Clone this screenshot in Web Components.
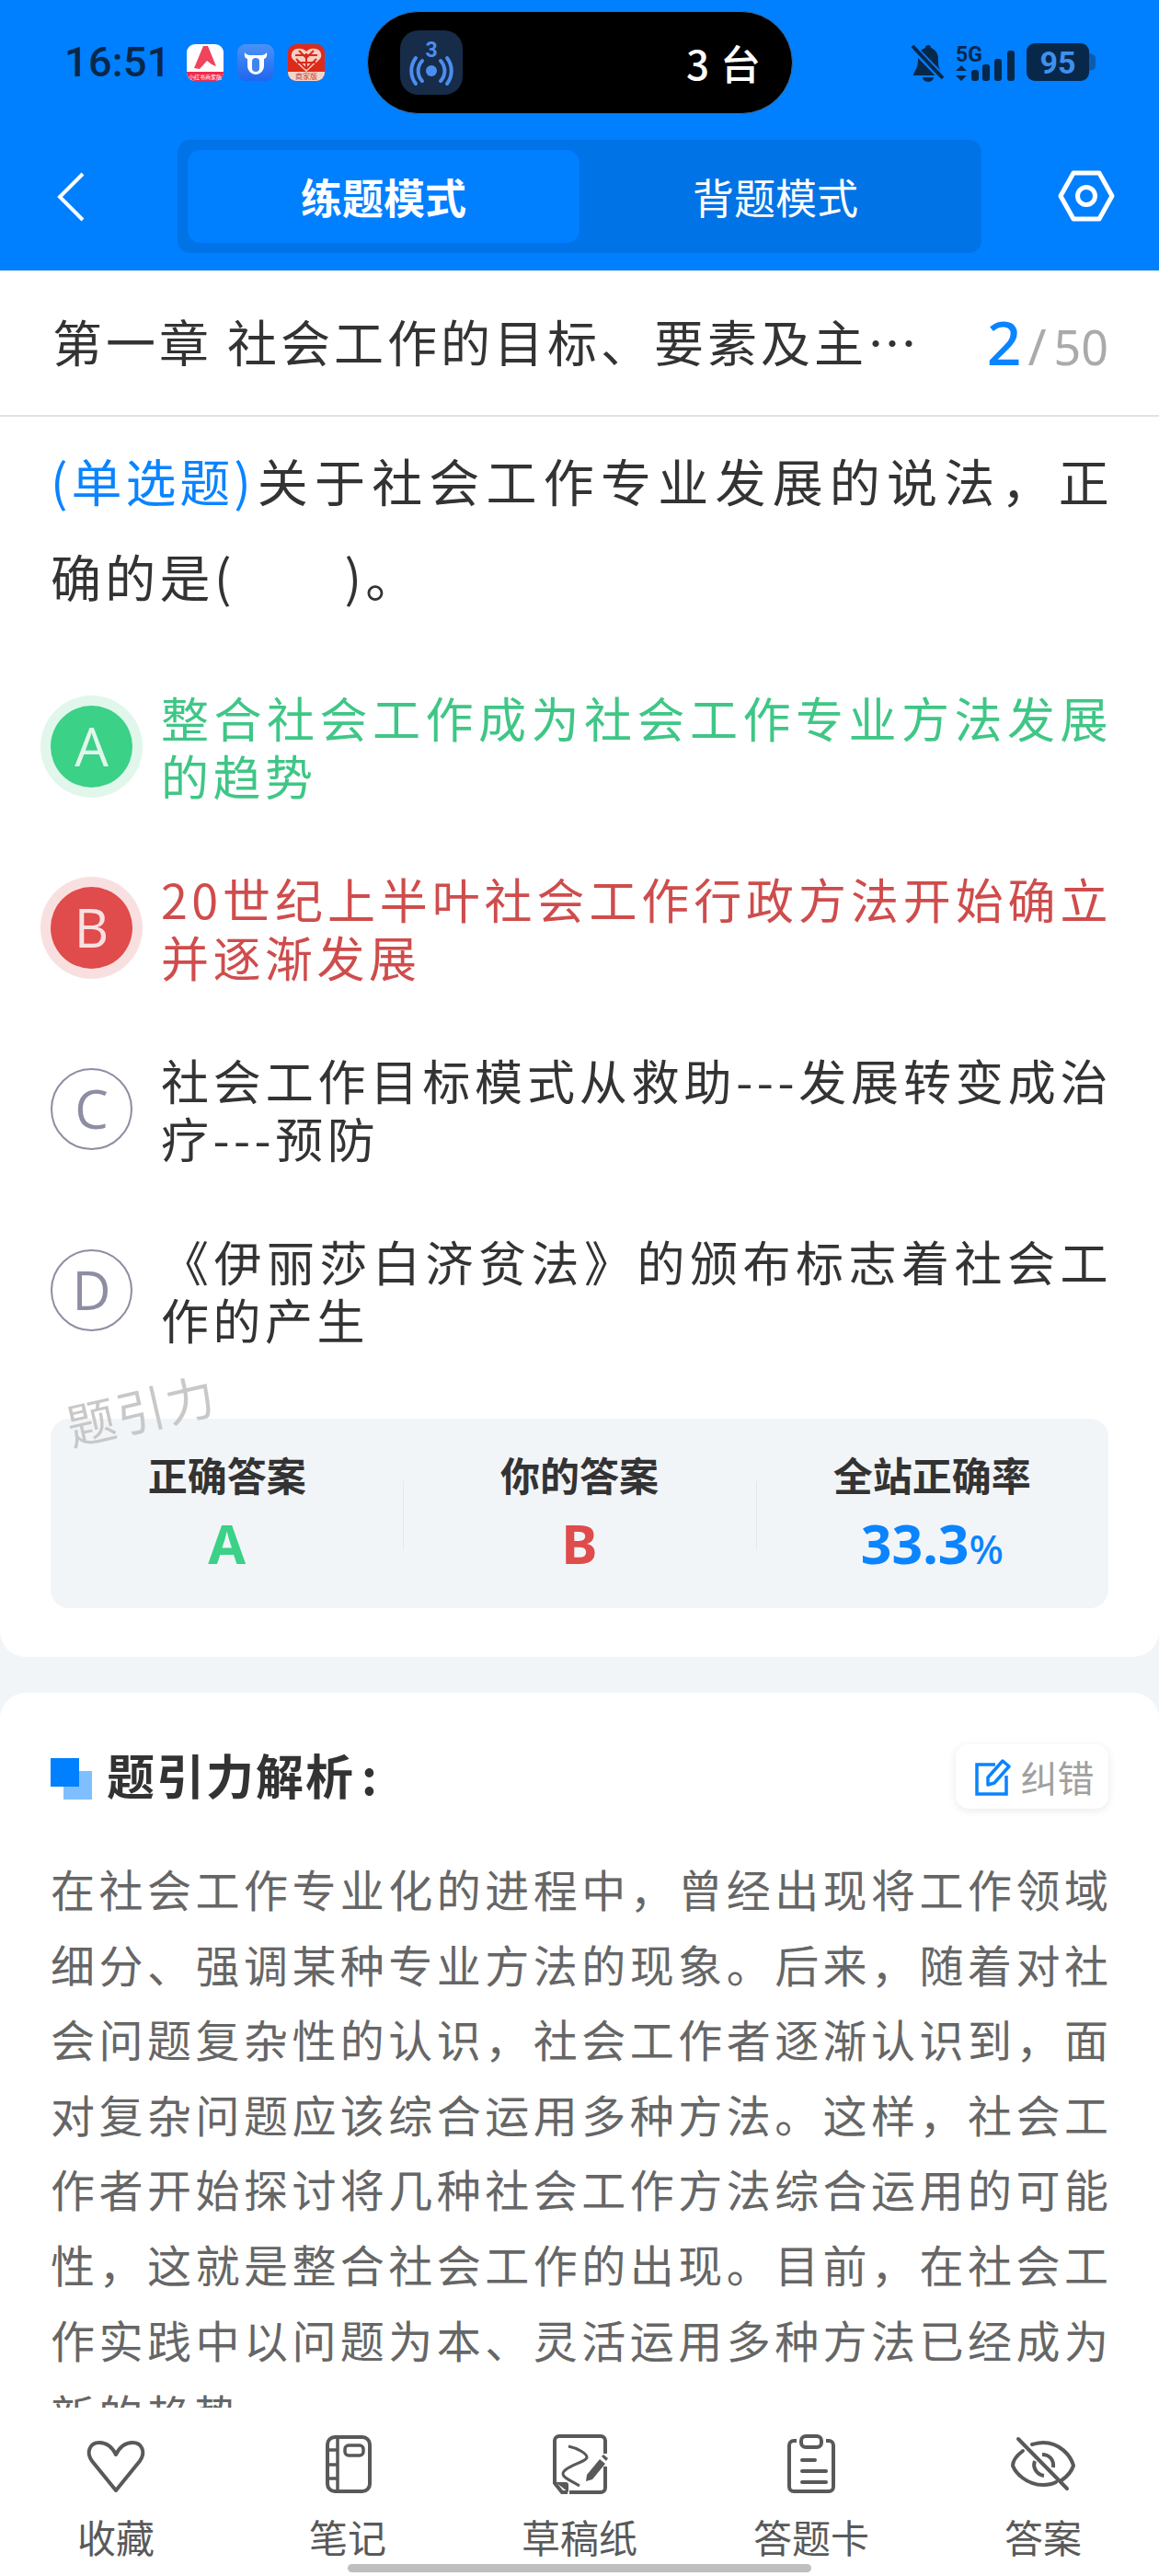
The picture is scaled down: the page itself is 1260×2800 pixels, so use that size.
<!DOCTYPE html>
<html lang="zh">
<head>
<meta charset="utf-8">
<title>练题模式</title>
<style>
    html, body { margin: 0; padding: 0; height: 2800px; overflow: hidden; }
    body {
        display: flex;
        flex-direction: column;
        background: #f2f5f8;
        font-family: "Noto Sans CJK SC", "Noto Sans", sans-serif;
    }
    .scroll { flex: 1; min-height: 0; overflow: hidden; display: block; }
    question-card b { font-weight: 400; color: #0a84ff; letter-spacing: 1px; margin-right: 3px; }
</style>
</head>
<body>
<app-header></app-header>
<div class="scroll">
    <title-row heading="第一章 社会工作的目标、要素及主…" current="2" total="50"></title-row>
    <question-card>
        <span slot="question"><b>(单选题)</b>关于社会工作专业发展的说法，正确的是(&emsp;&emsp;)。</span>
        <quiz-option letter="A" state="right">整合社会工作成为社会工作专业方法发展的趋势</quiz-option>
        <quiz-option letter="B" state="wrong">20世纪上半叶社会工作行政方法开始确立并逐渐发展</quiz-option>
        <quiz-option letter="C">社会工作目标模式从救助---发展转变成治疗---预防</quiz-option>
        <quiz-option letter="D">《伊丽莎白济贫法》的颁布标志着社会工作的产生</quiz-option>
        <answer-stats slot="stats" right="A" mine="B" rate="33.3"></answer-stats>
    </question-card>
    <analysis-card>在社会工作专业化的进程中，曾经出现将工作领域细分、强调某种专业方法的现象。后来，随着对社会问题复杂性的认识，社会工作者逐渐认识到，面对复杂问题应该综合运用多种方法。这样，社会工作者开始探讨将几种社会工作方法综合运用的可能性，这就是整合社会工作的出现。目前，在社会工作实践中以问题为本、灵活运用多种方法已经成为新的趋势。</analysis-card>
</div>
<tool-bar></tool-bar>

<script>
class AppHeader extends HTMLElement {
    constructor() {
        super();
        this.attachShadow({ mode: 'open' });
    }

    connectedCallback() {
        this.shadowRoot.innerHTML = `
            <style>
                :host { display: block; height: 294px; background: #007fff; flex: none; color: #fff; }
                .status { height: 152px; display: flex; align-items: flex-start; position: relative; }
                .time {
                    margin: 44px 0 0 70px; width: 133px;
                    font: 500 45px/48px Roboto, sans-serif; color: #08284a; letter-spacing: 0.3px;
                }
                .apps { margin-top: 48px; display: flex; gap: 15px; }
                .apps svg { display: block; }
                .pill {
                    margin: 12px 0 0 46px;
                    width: 463px; height: 112px; box-sizing: border-box;
                    background: #000; border-radius: 56px; border: 1px solid #3a6fa8;
                    display: flex; align-items: center; padding: 0 33px 0 35px;
                    justify-content: space-between;
                }
                .pill span { font: 500 44px/50px "Noto Sans CJK SC", sans-serif; letter-spacing: 1px; }
                .sys { margin: 47px 0 0 127px; display: flex; align-items: flex-start; }
                .nav { display: flex; align-items: flex-start; }
                .back { margin: 35px 0 0 62px; width: 131px; }
                .seg {
                    width: 874px; height: 123px; box-sizing: border-box;
                    background: #0073e6; border-radius: 14px; padding: 11px;
                    display: grid; grid-template-columns: 426px 1fr;
                }
                .seg div { display: flex; align-items: center; justify-content: center; font-size: 45px; line-height: 50px; border-radius: 14px; }
                .seg .on { background: #007fff; font-weight: 700; }
                .gear { margin: 33px 0 0 83px; }
                svg { display: block; }
            </style>
            <div class="status">
                <div class="time">16:51</div>
                <div class="apps">
                    <svg width="40" height="40" viewBox="0 0 40 40">
                        <rect width="40" height="40" rx="9" fill="#fff"/>
                        <path d="M0 30h40v1a9 9 0 0 1-9 9H9a9 9 0 0 1-9-9z" fill="#ee2c4c"/>
                        <path d="M18 2l5 0 9 22-5-2-5-4-8 9-6-1z" fill="#f0445c"/>
                        <text x="20" y="38" font-size="6" fill="#fff" text-anchor="middle">小红书商家版</text>
                    </svg>
                    <svg width="40" height="40" viewBox="0 0 40 40">
                        <defs><linearGradient id="qn" x1="0" y1="0" x2="0" y2="1"><stop offset="0" stop-color="#4a92f6"/><stop offset="1" stop-color="#1f66ee"/></linearGradient></defs>
                        <rect width="40" height="40" rx="9" fill="url(#qn)"/>
                        <path d="M8 9q2 3 5 3h14q3 0 5-3q1 6-3 7v8a9 9 0 0 1-18 0v-8q-4-1-3-7z" fill="#fff"/>
                        <rect x="16" y="15" width="8" height="15" rx="4" fill="#3f84f2"/>
                    </svg>
                    <svg width="40" height="40" viewBox="0 0 40 40">
                        <rect width="40" height="40" rx="9" fill="#dd2a1a"/>
                        <path d="M0 30h40v1a9 9 0 0 1-9 9H9a9 9 0 0 1-9-9z" fill="#f6d5c8"/>
                        <path d="M20 30L6 17a7 7 0 0 1 4-12q6-1 10 3q4-4 10-3a7 7 0 0 1 4 12z" fill="#f5cfc4"/>
                        <path d="M20 27L9 16M20 27l11-11M12 7l8 8 8-8M20 10v17M8 12h24M10 20h20" stroke="#dd2a1a" stroke-width="2" fill="none"/>
                        <text x="20" y="38" font-size="8" fill="#c43a2a" text-anchor="middle">商家版</text>
                    </svg>
                </div>
                <div class="pill">
                    <svg width="68" height="70" viewBox="0 0 68 70">
                        <rect width="68" height="70" rx="20" fill="#172c48"/>
                        <text x="34" y="29" font-size="23" font-weight="700" fill="#4c8df0" text-anchor="middle" font-family="Roboto, sans-serif">3</text>
                        <circle cx="34" cy="44" r="6" fill="#4c8df0"/>
                        <path d="M24 33a16 16 0 0 0 0 22M44 33a16 16 0 0 1 0 22M17 30a23 23 0 0 0 0 28M51 30a23 23 0 0 1 0 28" fill="none" stroke="#4c8df0" stroke-width="4" stroke-linecap="round"/>
                    </svg>
                    <span>3 台</span>
                </div>
                <div class="sys">
                    <svg width="204" height="42" viewBox="0 0 204 42">
                        <path d="M20 2c-2 0-3 1-3 3-6 2-8 7-8 12 0 7-1 10-5 16v2h31v-3c-4-5-4-9-4-15 0-6-3-10-8-12 0-2-1-3-3-3z" fill="#08284a"/>
                        <path d="M14 37a6 5 0 0 0 12 0z" fill="#08284a"/>
                        <path d="M2 3l34 35" stroke="#007fff" stroke-width="8"/>
                        <path d="M3 3l33 35" stroke="#08284a" stroke-width="4"/>
                        <text x="50" y="20" font-size="23" font-weight="700" fill="#08284a" font-family="Roboto, sans-serif">5G</text>
                        <path d="M56 24l6 6H50zM56 41l6-6H50z" fill="#08284a"/>
                        <rect x="67" y="29" width="8" height="12" rx="3" fill="#08284a"/>
                        <rect x="79" y="23" width="8" height="18" rx="3" fill="#08284a"/>
                        <rect x="92" y="17" width="8" height="24" rx="3" fill="#08284a"/>
                        <rect x="106" y="8" width="8" height="33" rx="3" fill="#08284a"/>
                        <rect x="127" y="0" width="68" height="41" rx="9" fill="#08284a"/>
                        <path d="M195 11q7 1 7 5v9q0 4-7 5z" fill="#0a5cb3"/>
                        <text x="161" y="33" font-size="34" font-weight="700" fill="#3f90ee" text-anchor="middle" font-family="Roboto, sans-serif">95</text>
                    </svg>
                </div>
            </div>
            <div class="nav">
                <div class="back">
                    <svg width="30" height="54" viewBox="0 0 30 54"><path d="M28 2L3 27l25 25" fill="none" stroke="#fff" stroke-width="4"/></svg>
                </div>
                <div class="seg">
                    <div class="on">练题模式</div>
                    <div>背题模式</div>
                </div>
                <div class="gear">
                    <svg width="62" height="56" viewBox="0 0 62 56">
                        <path d="M17 3h28l14 25-14 25H17L3 28z" fill="none" stroke="#fff" stroke-width="5" stroke-linejoin="round"/>
                        <circle cx="31" cy="28" r="9.5" fill="none" stroke="#fff" stroke-width="5"/>
                    </svg>
                </div>
            </div>
        `;
    }
}

class TitleRow extends HTMLElement {
    constructor() {
        super();
        this.attachShadow({ mode: 'open' });
    }

    connectedCallback() {
        this.shadowRoot.innerHTML = `
            <style>
                :host {
                    display: flex; align-items: center; height: 159px; box-sizing: border-box;
                    padding: 0 55px 4px 57px; background: #fff; border-bottom: 2px solid #e2e2e2;
                }
                .h {
                    flex: none; white-space: nowrap;
                    font-size: 54px; line-height: 70px; letter-spacing: 4px; color: #333;
                }
                .n { margin-left: auto; display: flex; align-items: baseline; font-family: "Noto Sans", sans-serif; }
                .c { font-size: 66px; color: #0a84ff; font-weight: 500; }
                .s { font-size: 54px; color: #aaa; margin: 0 8px 0 7px; }
                .t { font-size: 52px; color: #aaa; }
            </style>
            <div class="h">${this.getAttribute('heading')}</div>
            <div class="n">
                <span class="c">${this.getAttribute('current')}</span><span class="s">/</span><span class="t">${this.getAttribute('total')}</span>
            </div>
        `;
    }
}

class QuestionCard extends HTMLElement {
    constructor() {
        super();
        this.attachShadow({ mode: 'open' });
    }

    connectedCallback() {
        this.shadowRoot.innerHTML = `
            <style>
                :host {
                    display: block; position: relative; background: #fff;
                    padding: 16px 55px 53px; border-radius: 0 0 28px 28px; color: #333;
                }
                .q { font-size: 55px; line-height: 104px; letter-spacing: 4.3px; text-align: justify; margin: 0 -5px 71px 0; }
                .opts { display: flex; flex-direction: column; gap: 71px; margin-bottom: 77px; }
                ::slotted(span) { display: block; }
                .mark {
                    position: absolute; left: 66px; top: 1067px;
                    font-size: 53px; line-height: 60px; letter-spacing: 2px; color: #c8c8c8;
                    transform: rotate(-13deg); transform-origin: left top; pointer-events: none;
                    z-index: 1;
                }
            </style>
            <div class="q"><slot name="question"></slot></div>
            <div class="opts"><slot></slot></div>
            <slot name="stats"></slot>
            <div class="mark">题引力</div>
        `;
    }
}

class QuizOption extends HTMLElement {
    constructor() {
        super();
        this.attachShadow({ mode: 'open' });
    }

    connectedCallback() {
        const state = this.getAttribute('state') || 'idle';
        this.shadowRoot.innerHTML = `
            <style>
                :host { display: flex; align-items: center; margin-left: -11px; color: #333; }
                .dot {
                    flex: none; width: 89px; height: 89px; margin: 0 11px; box-sizing: border-box;
                    border-radius: 50%; display: flex; align-items: center; justify-content: center;
                    font: 400 58px/1 "Open Sans", sans-serif;
                }
                .txt {
                    flex: 1; margin: 0 -4px 0 20px; font-size: 52px; line-height: 63px;
                    letter-spacing: 4.5px; text-align: justify;
                }
                .idle .dot { border: 2.5px solid #8d8da3; color: #8d8da3; }
                .right .dot { background: #3bd186; color: #e1f7ec; box-shadow: 0 0 0 11px #e1f7ec; }
                .right .txt { color: #3fc686; }
                .wrong .dot { background: #e04b4b; color: #f9e0e0; box-shadow: 0 0 0 11px #f9e0e0; }
                .wrong .txt { color: #cf4c4c; }
                .wrap { display: contents; }
            </style>
            <div class="wrap ${state}">
                <div class="dot">${this.getAttribute('letter')}</div>
                <div class="txt"><slot></slot></div>
            </div>
        `;
    }
}

class AnswerStats extends HTMLElement {
    constructor() {
        super();
        this.attachShadow({ mode: 'open' });
    }

    connectedCallback() {
        this.shadowRoot.innerHTML = `
            <style>
                :host {
                    display: grid; grid-template-columns: repeat(3, 1fr); height: 206px;
                    background: #f2f5f8; border-radius: 20px;
                }
                .col { position: relative; text-align: center; padding-top: 35px; }
                .col + .col::before {
                    content: ''; position: absolute; left: 0; top: 68px; height: 74px; width: 1px; background: #e4e8ec;
                }
                .l { font-size: 43px; line-height: 50px; font-weight: 700; color: #333; }
                .v { margin-top: 15px; font: 700 59px/70px "Noto Sans", sans-serif; }
                .v small { font-size: 44px; font-weight: 500; }
            </style>
            <div class="col"><div class="l">正确答案</div><div class="v" style="color:#3bd186">${this.getAttribute('right')}</div></div>
            <div class="col"><div class="l">你的答案</div><div class="v" style="color:#e04b4b">${this.getAttribute('mine')}</div></div>
            <div class="col"><div class="l">全站正确率</div><div class="v" style="color:#0a84ff">${this.getAttribute('rate')}<small>%</small></div></div>
        `;
    }
}

class AnalysisCard extends HTMLElement {
    constructor() {
        super();
        this.attachShadow({ mode: 'open' });
    }

    connectedCallback() {
        this.shadowRoot.innerHTML = `
            <style>
                :host {
                    display: block; margin-top: 39px; background: #fff;
                    border-radius: 28px 28px 0 0; padding: 56px 55px 40px;
                }
                .head { display: flex; align-items: center; height: 70px; }
                .sq { position: relative; width: 45px; height: 45px; flex: none; margin-right: 16px; top: 2px; }
                .sq i { position: absolute; display: block; width: 31px; height: 31px; }
                .sq i:first-child { left: 14px; top: 14px; background: #80bfff; }
                .sq i:last-child { left: 0; top: 0; background: #007fff; }
                h2 { margin: 0 0 5px; font-size: 52px; line-height: 70px; font-weight: 700; color: #333; letter-spacing: 2px; }
                h2 span { margin-left: 7px; }
                .fix {
                    margin-left: auto; width: 166px; height: 70px; box-sizing: border-box; border-radius: 14px;
                    background: #fff; box-shadow: 0 2px 10px rgba(0,0,0,0.09);
                    display: flex; align-items: center; justify-content: center; gap: 9px;
                    font-size: 40px; line-height: 50px; color: #a0a0a0; padding-left: 4px;
                }
                .body {
                    margin: 46px -4px 0 0; font-size: 48px; line-height: 81.6px; letter-spacing: 4px;
                    color: #666; text-align: justify;
                }
            </style>
            <div class="head">
                <div class="sq"><i></i><i></i></div>
                <h2>题引力解析<span>:</span></h2>
                <div class="fix">
                    <svg width="42" height="42" viewBox="0 0 40 42" style="display:block">
                        <path d="M22 8H2v32h32V20" fill="none" stroke="#0a84ff" stroke-width="3.5"/>
                        <path d="M14 30l0-8L30 4l7 6-16 18z" fill="none" stroke="#0a84ff" stroke-width="3.5" stroke-linejoin="round"/>
                    </svg>
                    <span>纠错</span>
                </div>
            </div>
            <div class="body"><slot></slot></div>
        `;
    }
}

const TOOL_ICONS = {
    heart: `<path d="M36 63L10 31C3 21 8 11 18 11c8 0 14 5 18 13 4-8 10-13 18-13 10 0 15 10 8 20z" fill="none" stroke="#595959" stroke-width="4" stroke-linejoin="round"/>`,
    note: `<rect x="14" y="5" width="46" height="59" rx="8" fill="none" stroke="#595959" stroke-width="4"/>
        <path d="M25 5v59M14 19h11M14 35h11M14 50h11" fill="none" stroke="#595959" stroke-width="3.5"/>
        <rect x="33" y="14" width="20" height="11" rx="4" fill="none" stroke="#595959" stroke-width="3.5"/>`,
    draft: `<path d="M23 65H17l-8-10V9a5 5 0 0 1 5-5h45a5 5 0 0 1 5 5v14M64 37v23a5 5 0 0 1-5 5H25" fill="none" stroke="#595959" stroke-width="4"/>
        <path d="M10 54h11a3 3 0 0 1 3 3v8z" fill="#595959"/>
        <path d="M24 15c10 2 20 8 20 12 0 5-26 10-26 18 0 4 8 7 18 13" fill="none" stroke="#595959" stroke-width="3"/>
        <path d="M44 46L58 29l6 5-14 17-7 2z" fill="#595959"/>
        <path d="M60 26l2-2 5 4-2 3z" fill="#595959"/>`,
    card: `<path d="M20 9h-3a5 5 0 0 0-5 5v45a5 5 0 0 0 5 5h38a5 5 0 0 0 5-5V14a5 5 0 0 0-5-5h-3" fill="none" stroke="#595959" stroke-width="4"/>
        <rect x="25" y="4" width="22" height="12" rx="5" fill="none" stroke="#595959" stroke-width="4"/>
        <path d="M26 30h14M26 42h26M26 54h26" fill="none" stroke="#595959" stroke-width="4" stroke-linecap="round"/>`,
    eye: `<path d="M14 20C6 26 3 31 3 36c3 8 15 21 33 21 5 0 10-1 14-3M24 13c4-1 8-2 12-2 18 0 30 14 33 25-2 6-7 12-13 16" fill="none" stroke="#595959" stroke-width="4" stroke-linecap="round"/>
        <path d="M27 31c-3 8 3 15 10 16M35 24c8 0 13 6 12 14" fill="none" stroke="#595959" stroke-width="4"/>
        <path d="M9 7l53 54" stroke="#595959" stroke-width="4" stroke-linecap="round"/>`
};

class ToolItem extends HTMLElement {
    constructor() {
        super();
        this.attachShadow({ mode: 'open' });
    }

    connectedCallback() {
        this.shadowRoot.innerHTML = `
            <style>
                :host { display: flex; flex-direction: column; align-items: center; color: #595959; }
                svg { display: block; }
                span { margin-top: 20px; font-size: 42px; line-height: 50px; }
            </style>
            <svg width="72" height="68" viewBox="0 0 72 68">${TOOL_ICONS[this.getAttribute('icon')]}</svg>
            <span>${this.getAttribute('label')}</span>
        `;
    }
}

class ToolBar extends HTMLElement {
    constructor() {
        super();
        this.attachShadow({ mode: 'open' });
    }

    connectedCallback() {
        this.shadowRoot.innerHTML = `
            <style>
                :host {
                    display: grid; grid-template-columns: repeat(5, 1fr); flex: none; position: relative;
                    height: 183px; box-sizing: border-box; padding-top: 27px; background: #fff;
                }
                .home {
                    position: absolute; left: 378px; width: 504px; bottom: 4px; height: 9px;
                    border-radius: 5px; background: #bfbfbf;
                }
            </style>
            <tool-item icon="heart" label="收藏"></tool-item>
            <tool-item icon="note" label="笔记"></tool-item>
            <tool-item icon="draft" label="草稿纸"></tool-item>
            <tool-item icon="card" label="答题卡"></tool-item>
            <tool-item icon="eye" label="答案"></tool-item>
            <div class="home"></div>
        `;
    }
}

customElements.define('app-header', AppHeader);
customElements.define('title-row', TitleRow);
customElements.define('question-card', QuestionCard);
customElements.define('quiz-option', QuizOption);
customElements.define('answer-stats', AnswerStats);
customElements.define('analysis-card', AnalysisCard);
customElements.define('tool-item', ToolItem);
customElements.define('tool-bar', ToolBar);
</script>
</body>
</html>
